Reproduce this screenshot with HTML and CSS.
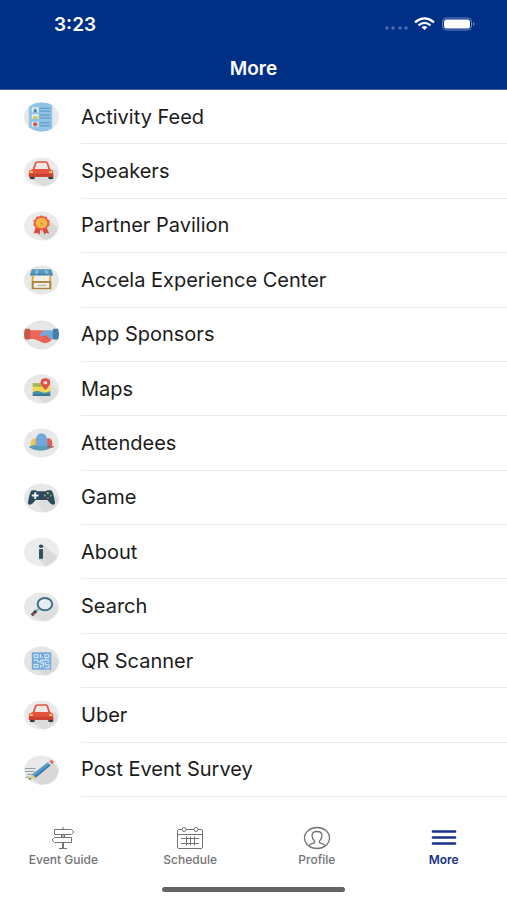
FILE: index.html
```html
<!DOCTYPE html>
<html lang="en">

<head>
    <meta charset="UTF-8">
    <meta name="viewport" content="width=device-width, initial-scale=1.0">
    <title>More</title>
    <link rel="stylesheet" href="styles.css">
</head>

<body>
    <header class="header">
        <div class="status">
            <span class="time">3:23</span>
            <svg class="status-icons" width="92" height="16" viewBox="0 0 92 16">
                <g fill="#4a6db5">
                    <circle cx="4" cy="12" r="1.700" />
                    <circle cx="10" cy="12" r="1.700" />
                    <circle cx="17" cy="12" r="1.700" />
                    <circle cx="23" cy="12" r="1.700" />
                </g>
                <g fill="none" stroke="#fff" stroke-width="2.300">
                    <path d="M32 6.300Q41.500-1.500 51 6.300" />
                    <path d="M35.500 9.300Q41.500 4.500 47.500 9.300" />
                </g>
                <path d="M38.500 11.200Q41.500 9 44.500 11.200L41.500 14Z" fill="#fff" />
                <rect x="59.500" y="2" width="29" height="12" rx="4" fill="none" stroke="#6b86c2" />
                <rect x="61" y="3.500" width="26" height="9" rx="2.500" fill="#fff" />
                <path d="M90 6Q93 8 90 10Z" fill="#6b86c2" />
            </svg>
        </div>
        <h1 class="title">More</h1>
    </header>

    <main class="list">
        <a class="row" href="#">
            <svg class="icon" viewBox="0 0 36 30">
                <ellipse cx="18" cy="15" rx="18" ry="15" fill="#e7e8e9" />
                <path d="M5 4.500Q10 0 18 0T29 3V27Q24 30 18 30T5 25.500Z" fill="#91c3e6" />
                <path d="M8 5h7v5H8zM8 12h7v5H8zM8 20h7v5H8z" fill="#dcebf3" />
                <path d="M10 10V8l1.500-2L13 8v2z" fill="#4385b5" />
                <path d="M9 17v-2l2.500-1 2.500 1v2z" fill="#dcc54e" />
                <circle cx="11.500" cy="22.500" r="2.200" fill="#de5147" />
                <path d="M16 6h11M16 9h11M16 13h11M16 16h11M16 21h11M16 24h11" stroke="#5795bd" />
            </svg>
            <span class="label">Activity Feed</span>
        </a>
        <a class="row" href="#">
            <svg class="icon" viewBox="0 0 36 30">
                <ellipse cx="18" cy="15" rx="18" ry="15" fill="#ebebeb" />
                <path d="M31 12l4 4Q33 28 20 30L7 22z" fill="#dcdcdd" />
                <path d="M6 19h5v3q-2.500 1-5 0zM25 19h5v3q-2.500 1-5 0z" fill="#353d43" />
                <path d="M9 12l2-6q.5-2 3-2h8q2.500 0 3 2l2 6 3 2v6H5v-6z" fill="#e5533f" />
                <path d="M11 12l1.500-5q.5-1.500 2-1.500h7q1.500 0 2 1.500L25 12z" fill="#eee9e7" />
                <path d="M5 17h25v3H5z" fill="#c8402f" />
                <path d="M6 14h3v2H6zM26 14h3v2h-3z" fill="#f5c85a" />
            </svg>
            <span class="label">Speakers</span>
        </a>
        <a class="row" href="#">
            <svg class="icon" viewBox="0 0 36 30">
                <ellipse cx="18" cy="15" rx="18" ry="15" fill="#ebebeb" />
                <path d="M26 9l9 8Q33 27 22 30L12 23z" fill="#d8d8d9" />
                <path d="M12 16h5l-1 8-2.500-2L10 23zM18 16h5l3 7-3.500-1L21 24z" fill="#d84a38" />
                <path d="M18 4l2.500 1.200 2.800.300.900 2.300 2.300 1.700-.7 2.500.7 2.500-2.300 1.500-1 2.300-2.700.1L18 20l-2.500-1.600-2.700-.1-1-2.300-2.300-1.500.7-2.500-.7-2.500 2.300-1.700.9-2.300 2.800-.3z" fill="#ee6047" />
                <ellipse cx="18" cy="12" rx="6" ry="5.200" fill="#f8bd43" />
                <ellipse cx="18" cy="12" rx="3.500" ry="3" fill="#f4cf5d" stroke="#e8a339" />
                <path d="M18 9.800l.8 1.500 1.600.2-1.200 1.100.3 1.600-1.500-.7-1.500.7.3-1.600-1.200-1.100 1.600-.2z" fill="#de9733" />
            </svg>
            <span class="label">Partner Pavilion</span>
        </a>
        <a class="row" href="#">
            <svg class="icon" viewBox="0 0 36 30">
                <ellipse cx="18" cy="15" rx="18" ry="15" fill="#e8e8e7" />
                <path d="M9 9h18v15H9z" fill="#f4f1ea" />
                <path d="M8 10h2v14H8zM26 10h2v14h-2z" fill="#e3ac43" />
                <path d="M8 16h20v8.500H8z" fill="#a98443" />
                <path d="M10 18h16v5H10z" fill="#f2eee5" />
                <path d="M14 20.500h9" stroke="#aaa99f" />
                <path d="M8 4h20l2 6q-2 1.500-4 0-2 1.500-4 0-2 1.500-4 0-2 1.500-4 0-2 1.500-4 0-2 1.500-4 0z" fill="#5797bd" />
                <path d="M12 5h3l-1 5h-3zM21 5h3l2 5h-3z" fill="#8dbbd5" />
                <path d="M7 9h22" stroke="#407e9f" />
            </svg>
            <span class="label">Accela Experience Center</span>
        </a>
        <a class="row" href="#">
            <svg class="icon" viewBox="0 0 36 30">
                <ellipse cx="18" cy="15" rx="18" ry="15" fill="#e6e6e6" />
                <path d="M30 10H20l-7 4 1 3h5l6 4 5-2z" fill="#72aad9" />
                <path d="M6 10h11l4 1-5 3q1 3 4 2l3-1 5 5q0 2-2 2l-2 1-2 .6-3-.6-4-2-5-2H6z" fill="#ec6758" />
                <path d="M20 16l6 4M19 19l4 3" stroke="#ce5147" fill="none" />
                <path d="M1 8.500h5q1 5 0 11H1q-2-5.500 0-11z" fill="#c9584b" />
                <path d="M30 8.500h5q2 5.500 0 11h-5q-1-6 0-11z" fill="#437eae" />
            </svg>
            <span class="label">App Sponsors</span>
        </a>
        <a class="row" href="#">
            <svg class="icon" viewBox="0 0 36 30">
                <ellipse cx="18" cy="15" rx="18" ry="15" fill="#e7e7e7" />
                <path d="M28 10l7 7Q32 27 21 30l-8-7z" fill="#dcdddc" />
                <path d="M9 9h18v13H9z" fill="#f3d951" />
                <path d="M9 9h9l2 3-4 1q-3-1-7 0z" fill="#a3b455" />
                <path d="M9 18q5-2 9 0t9-1v5H9z" fill="#4391ac" />
                <path d="M9 20.500h18v1.500H9z" fill="#316f92" />
                <path d="M22 16q-5-5-5-7.500Q17 4 22 4t5 4.500Q27 11 22 16z" fill="#df5148" />
                <ellipse cx="22" cy="8.500" rx="2" ry="1.700" fill="#f5dddd" />
            </svg>
            <span class="label">Maps</span>
        </a>
        <a class="row" href="#">
            <svg class="icon" viewBox="0 0 36 30">
                <ellipse cx="18" cy="15" rx="18" ry="15" fill="#e8e8e8" />
                <path d="M7 18q-1-8 5-8 4 0 4 9H5z" fill="#f0c64a" />
                <path d="M20 18q0-8 5-8t4 8h2q0 2-5 2h-6z" fill="#df6055" />
                <path d="M12 19V12q1-7 6-7t6 7v7z" fill="#70a8dc" />
                <path d="M5 19q3-2 6-2 7 2 13 0 2 0 5 2-3 3-12 4-9-1-12-4z" fill="#5a9bb9" />
                <path d="M25 18l5 1-3 1-3-1z" fill="#b84c42" />
            </svg>
            <span class="label">Attendees</span>
        </a>
        <a class="row" href="#">
            <svg class="icon" viewBox="0 0 36 30">
                <ellipse cx="18" cy="15" rx="18" ry="15" fill="#e8e8e8" />
                <path d="M28 8l8 8Q34 28 21 30l-8-9z" fill="#dedede" />
                <path d="M8 7h4l1.500 1h9L24 7h4q2 1 4 13 0 2-2 2-2 0-6-5H12q-4 5-6 5-2 0-2-2Q6 8 8 7z" fill="#2b4b5d" />
                <path d="M11.500 9v7M8 12.500h7" stroke="#eef1f1" stroke-width="2" />
                <circle cx="24.500" cy="10" r="1.100" fill="#d7b84c" />
                <circle cx="24.500" cy="15" r="1.100" fill="#c9514d" />
                <circle cx="21.500" cy="12.500" r="1.100" fill="#6daabf" />
                <circle cx="27.500" cy="12.500" r="1.100" fill="#6fa661" />
            </svg>
            <span class="label">Game</span>
        </a>
        <a class="row" href="#">
            <svg class="icon" viewBox="0 0 36 30">
                <ellipse cx="18" cy="15" rx="18" ry="15" fill="#ececec" />
                <path d="M20 8l14 12q-4 8-12 10l-7-8z" fill="#dadada" />
                <ellipse cx="17.500" cy="9" rx="2.200" ry="1.800" fill="#294d5d" />
                <rect x="15.500" y="12" width="4" height="10" fill="#294d5d" />
            </svg>
            <span class="label">About</span>
        </a>
        <a class="row" href="#">
            <svg class="icon" viewBox="0 0 36 30">
                <ellipse cx="18" cy="15" rx="18" ry="15" fill="#e8e8e8" />
                <path d="M28 8l7 8Q34 27 21 30L8 24z" fill="#dedede" />
                <path d="M15 17l-3 2.500" stroke="#8ba4ad" stroke-width="2" />
                <path d="M12.500 19L8 23.500" stroke="#34434d" stroke-width="3" />
                <path d="M9 21.500l2 1" stroke="#cf5750" stroke-width="2" />
                <ellipse cx="21.500" cy="12" rx="7.500" ry="6.300" fill="#e5edf0" stroke="#416f86" stroke-width="2" />
                <path d="M17 11q1-3 4-3" stroke="#fff" fill="none" />
            </svg>
            <span class="label">Search</span>
        </a>
        <a class="row" href="#">
            <svg class="icon" viewBox="0 0 36 30">
                <ellipse cx="18" cy="15" rx="18" ry="15" fill="#e5e5e5" />
                <path d="M28 7l8 8Q34 28 21 30l-9-7z" fill="#dadada" />
                <path d="M8 6h20v18H8z" fill="#75aadd" />
                <g fill="none" stroke="#e7f1f7">
                    <path d="M10.500 8.500h4v3h-4zM21.500 8.500h4v3h-4zM10.500 18.500h4v3h-4z" />
                    <path d="M17 8v3h2M10 14h4v2h3v-2h3M21 14h5M18 17h2v3h-3v2M22 16v3h4v3h-4M20 22h1M24 16h2M17 18l6-6" />
                </g>
            </svg>
            <span class="label">QR Scanner</span>
        </a>
        <a class="row" href="#">
            <svg class="icon" viewBox="0 0 36 30">
                <ellipse cx="18" cy="15" rx="18" ry="15" fill="#ebebeb" />
                <path d="M31 12l4 4Q33 28 20 30L7 22z" fill="#dcdcdd" />
                <path d="M6 19h5v3q-2.500 1-5 0zM25 19h5v3q-2.500 1-5 0z" fill="#353d43" />
                <path d="M9 12l2-6q.5-2 3-2h8q2.500 0 3 2l2 6 3 2v6H5v-6z" fill="#e5533f" />
                <path d="M11 12l1.500-5q.5-1.500 2-1.500h7q1.500 0 2 1.500L25 12z" fill="#eee9e7" />
                <path d="M5 17h25v3H5z" fill="#c8402f" />
                <path d="M6 14h3v2H6zM26 14h3v2h-3z" fill="#f5c85a" />
            </svg>
            <span class="label">Uber</span>
        </a>
        <a class="row" href="#">
            <svg class="icon" viewBox="0 0 36 30">
                <ellipse cx="18" cy="15" rx="18" ry="15" fill="#e9e9e9" />
                <path d="M29 6l7 9Q34 28 22 30h-6l-8-6z" fill="#d9d9da" />
                <path d="M1 13.500h11M1 16.500h10M3 19.500h7M1 22.500h5" stroke="#8a9aa2" />
                <path d="M8 19.500L24.500 7l3 3L12 23z" fill="#5a9bc9" />
                <path d="M10.500 21.500L26.500 9l1 1L12 23z" fill="#397ba6" />
                <path d="M24.500 7l1.500-1 3 3-1.500 1z" fill="#d6dce0" />
                <path d="M26 6q3-2 4 0 1 1-1 3z" fill="#e0665b" />
                <path d="M8 19.500l4 3.500-7 2z" fill="#efcc78" />
                <path d="M6 23l1.500 1.300L5 25z" fill="#35434b" />
            </svg>
            <span class="label">Post Event Survey</span>
        </a>
    </main>

    <footer class="footer">
        <nav class="tabs">
            <a class="tab" href="#">
                <svg class="tab-icon" viewBox="0 0 28 24">
                    <path d="M14 1v2M14 9v2M12.500 9v2M15.500 9v2M13.500 16.500V22M14.500 16.500V22M10 22.500h8M5.500 3.500h17l2.500 2.500-2.500 2.500h-17zM22.500 11.500h-17L3 14l2.500 2.500h17z" />
                </svg>
                <span>Event Guide</span>
            </a>
            <a class="tab" href="#">
                <svg class="tab-icon" viewBox="0 0 28 24">
                    <path d="M6 3.500H3q-1.500 0-1.500 1.500v16q0 1.500 1.500 1.500h22q1.500 0 1.500-1.500V5q0-1.500-1.500-1.500h-3M10 3.500h8M1.500 8.500h25M5 12.500h18M5 17.500h18M10.500 10.500v9M14.500 10.500v9M18.500 10.500v9" />
                    <circle cx="8" cy="3.500" r="2" />
                    <circle cx="20" cy="3.500" r="2" />
                </svg>
                <span>Schedule</span>
            </a>
            <a class="tab" href="#">
                <svg class="tab-icon" viewBox="0 0 28 24">
                    <ellipse cx="14" cy="12" rx="12.500" ry="10.500" stroke-width="1.300" />
                    <path d="M6 19.500q1-1.500 4-2.200 2.500-.6 1.500-2.300Q9 12.500 9 9.500 9 5.500 14 5.500t5 4q0 3-2.500 5.500-1 1.700 1.500 2.300 3 .7 4 2.200" stroke-width="1.300" />
                </svg>
                <span>Profile</span>
            </a>
            <a class="tab active" href="#">
                <svg class="tab-icon" viewBox="0 0 28 24">
                    <path d="M3 5.500h22M3 11.500h22M3 17.500h22" stroke-width="2.700" stroke-linecap="round" />
                </svg>
                <span>More</span>
            </a>
        </nav>
        <div class="home-bar"></div>
    </footer>
</body>

</html>
```
FILE: styles.css
```css
* {
    box-sizing: border-box;
}

body {
    margin: 0;
    min-height: 100vh;
    display: flex;
    flex-direction: column;
    background: #fff;
    color: #1b1b1b;
    font-family: Inter, "Liberation Sans", sans-serif;
}

a {
    color: inherit;
    text-decoration: none;
}

.header {
    background: #002f86;
    border-bottom: 1px solid #4463a4;
    color: #fff;
    padding: 12px 32px 8px;
}

.status {
    display: flex;
    justify-content: space-between;
    align-items: center;
    height: 24px;
    padding-left: 22px;
}

.time {
    font-size: 19px;
    font-weight: 600;
}

.title {
    margin: 21px 0 0;
    font-size: 19px;
    line-height: 24px;
    font-weight: 600;
    text-align: center;
}

.list {
    flex: 1;
    display: grid;
    grid-auto-rows: 1fr;
}

.row {
    display: flex;
    align-items: center;
    padding-left: 24px;
    gap: 22px;
}

.icon {
    width: 35px;
    height: 30px;
    flex: none;
}

.label {
    flex: 1;
    align-self: stretch;
    display: flex;
    align-items: center;
    border-bottom: 1px solid #ebebeb;
    font-size: 20px;
}

.footer {
    padding: 29px 0 8px;
}

.tabs {
    display: grid;
    grid-template-columns: repeat(4, 1fr);
}

.tab {
    display: flex;
    flex-direction: column;
    align-items: center;
    gap: 2px;
    color: #737373;
    font-size: 12px;
    line-height: 16px;
    font-weight: 500;
}

.tab-icon {
    width: 28px;
    height: 24px;
    fill: none;
    stroke: currentColor;
}

.active {
    color: #17318a;
    font-weight: 600;
}

.home-bar {
    width: 36%;
    height: 5px;
    margin: 19px auto 0;
    border-radius: 3px;
    background: #646464;
}
```
